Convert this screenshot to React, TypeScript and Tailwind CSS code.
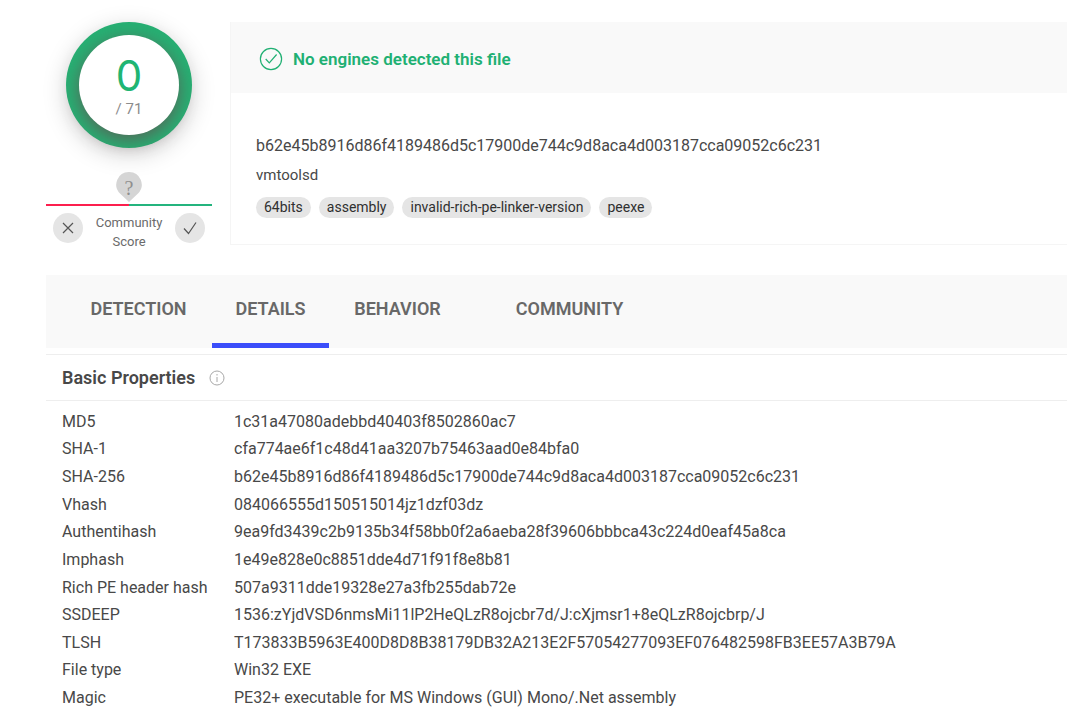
const tags = ["64bits", "assembly", "invalid-rich-pe-linker-version", "peexe"];

const properties = [
  ["MD5", "1c31a47080adebbd40403f8502860ac7"],
  ["SHA-1", "cfa774ae6f1c48d41aa3207b75463aad0e84bfa0"],
  ["SHA-256", "b62e45b8916d86f4189486d5c17900de744c9d8aca4d003187cca09052c6c231"],
  ["Vhash", "084066555d150515014jz1dzf03dz"],
  ["Authentihash", "9ea9fd3439c2b9135b34f58bb0f2a6aeba28f39606bbbca43c224d0eaf45a8ca"],
  ["Imphash", "1e49e828e0c8851dde4d71f91f8e8b81"],
  ["Rich PE header hash", "507a9311dde19328e27a3fb255dab72e"],
  ["SSDEEP", "1536:zYjdVSD6nmsMi11lP2HeQLzR8ojcbr7d/J:cXjmsr1+8eQLzR8ojcbrp/J"],
  ["TLSH", "T173833B5963E400D8D8B38179DB32A213E2F57054277093EF076482598FB3EE57A3B79A"],
  ["File type", "Win32 EXE"],
  ["Magic", "PE32+ executable for MS Windows (GUI) Mono/.Net assembly"],
];

function ScoreDial() {
  return (
    <div className="flex size-[126px] items-center justify-center rounded-full bg-[#26b073] shadow-[0_6px_24px_rgba(0,0,0,0.18)]">
      <div className="flex size-[100px] flex-col items-center rounded-full bg-white pt-[18px] shadow-[0_5px_18px_rgba(100,80,80,0.8)]">
        <span className="font-[Inter,sans-serif] text-[42px] leading-[46px] text-[#20b573]">0</span>
        <span className="text-[15px] leading-5 text-[#8c8c8c]">/ 71</span>
      </div>
    </div>
  );
}

function CommunityScore() {
  return (
    <div className="mt-6 flex w-full flex-col items-center">
      <svg className="h-[30px] w-[26px]" viewBox="0 0 26 30" aria-hidden="true">
        <path d="M13 0a12.6 12.6 0 0 0-9 21.5L13 30l9-8.5A12.6 12.6 0 0 0 13 0Z" fill="#d5d5d5" />
        <text x="13" y="23" textAnchor="middle" fontSize="20" fill="#8e8e8e" className="font-['Liberation_Serif',serif]">?</text>
      </svg>
      <div className="mt-[2px] flex h-[2px] w-full">
        <div className="flex-1 bg-[#fc1f4e]" />
        <div className="flex-1 bg-[#24b47e]" />
      </div>
      <div className="flex w-full justify-between px-[7px] pt-[7px]">
        <button type="button" aria-label="Vote malicious" className="flex size-[30px] items-center justify-center rounded-full bg-[#e5e5e5]">
          <svg className="size-3" viewBox="0 0 12 12" fill="none" stroke="#555" strokeWidth="1.2" aria-hidden="true">
            <path d="M1 1l10 10M11 1L1 11" />
          </svg>
        </button>
        <div className="text-center text-[13px] leading-[19px] text-[#6b6b6b]">
          Community
          <br />
          Score
        </div>
        <button type="button" aria-label="Vote harmless" className="flex size-[30px] items-center justify-center rounded-full bg-[#e5e5e5]">
          <svg className="size-[14px]" viewBox="0 0 14 14" fill="none" stroke="#555" strokeWidth="1.2" aria-hidden="true">
            <path d="M1 7.5L5.5 12.5L13 1.5" />
          </svg>
        </button>
      </div>
    </div>
  );
}

export default function App() {
  return (
    <div className="bg-white pl-[46px] pt-[22px] font-[Roboto,sans-serif] text-[#484848]">
      <div className="flex gap-[18px]">
        <aside className="flex w-[166px] shrink-0 flex-col items-center">
          <ScoreDial />
          <CommunityScore />
        </aside>
        <section className="h-[223px] min-w-0 flex-1 border-b border-l border-[#f5f5f5]">
          <div className="flex h-[71px] items-center gap-[10px] bg-[#f9f9f9] pl-7 pt-[2px]">
            <svg className="size-6" viewBox="0 0 24 24" fill="none" stroke="#20b073" strokeWidth="1.2" aria-hidden="true">
              <circle cx="12" cy="12" r="10.6" />
              <path d="M6.7 12L10.3 15.8L17.6 7.5" />
            </svg>
            <h1 className="text-[17px] leading-6 font-semibold text-[#20b073]">No engines detected this file</h1>
          </div>
          <div className="pl-[25px] pt-[41px]">
            <p className="text-base leading-6">b62e45b8916d86f4189486d5c17900de744c9d8aca4d003187cca09052c6c231</p>
            <p className="mt-[5px] text-[15px] leading-6">vmtoolsd</p>
            <ul className="mt-[10px] flex gap-2">
              {tags.map((tag) => (
                <li key={tag} className="rounded-full bg-[#e5e5e5] px-2 text-sm leading-[21px] text-[#303030]">
                  {tag}
                </li>
              ))}
            </ul>
          </div>
        </section>
      </div>

      <nav className="mt-6 flex h-[73px] bg-[#f9f9f9] pl-[19px] text-lg font-semibold text-[#686868]">
        <button type="button" className="w-[147px] border-b-[5px] border-transparent">DETECTION</button>
        <button type="button" className="w-[117px] border-b-[5px] border-[#3b4efa]">DETAILS</button>
        <button type="button" className="w-[137px] border-b-[5px] border-transparent">BEHAVIOR</button>
        <button type="button" className="ml-6 w-[159px] border-b-[5px] border-transparent">COMMUNITY</button>
      </nav>

      <section className="mt-[6px]">
        <div className="flex h-[47px] items-center gap-[14px] border-y border-[#eeeeee] pl-4">
          <h2 className="text-lg leading-6 font-semibold">Basic Properties</h2>
          <svg className="size-4" viewBox="0 0 16 16" fill="none" stroke="#a8a8a8" aria-hidden="true">
            <circle cx="8" cy="8" r="7" />
            <path d="M8 7v5M8 4v1.5" />
          </svg>
        </div>
        <table className="mt-[7px] h-[304px] w-full text-left text-base leading-5">
          <tbody>
            {properties.map(([name, value]) => (
              <tr key={name}>
                <th scope="row" className="w-[188px] whitespace-nowrap pl-4 font-normal">{name}</th>
                <td>{value}</td>
              </tr>
            ))}
          </tbody>
        </table>
      </section>
    </div>
  );
}
